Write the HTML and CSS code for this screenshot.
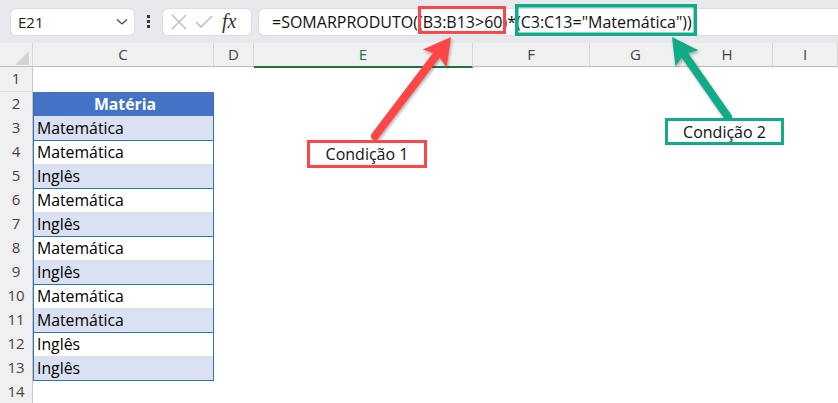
FILE: index.html
```html
<!DOCTYPE html>
<html lang="pt-BR">
<head>
    <meta charset="UTF-8">
    <title>SOMARPRODUTO com condições</title>
    <link rel="stylesheet" href="styles.css">
</head>
<body>
    <div class="topbar">
        <div class="namebox">
            <span>E21</span>
            <svg width="12" height="8" viewBox="0 0 12 8"><path d="M1 1.5 L6 6 L11 1.5" fill="none" stroke="#444" stroke-width="1.3"/></svg>
        </div>
        <div class="dots"><i></i><i></i><i></i></div>
        <div class="fxbox">
            <svg width="18" height="16" viewBox="0 0 18 16"><path d="M2 1 L16 15 M16 1 L2 15" stroke="#b8b8b8" stroke-width="1.3" fill="none"/></svg>
            <svg width="18" height="16" viewBox="0 0 18 16"><path d="M1 8 L6 13 L17 2" stroke="#b8b8b8" stroke-width="1.3" fill="none"/></svg>
            <span class="fx">fx</span>
        </div>
        <div class="formula">=SOMARPRODUTO((B3:B13&gt;60)*(C3:C13="Matemática"))</div>
    </div>

    <div class="sheet">
        <div class="colhead">
            <div class="corner"><span></span></div>
            <div>C</div>
            <div>D</div>
            <div class="sel">E</div>
            <div>F</div>
            <div>G</div>
            <div>H</div>
            <div>I</div>
        </div>
        <div class="row first"><div class="rh">1</div><div></div></div>
        <div class="row"><div class="rh">2</div><div class="cell th">Matéria</div></div>
        <div class="row"><div class="rh">3</div><div class="cell alt">Matemática</div></div>
        <div class="row"><div class="rh">4</div><div class="cell">Matemática</div></div>
        <div class="row"><div class="rh">5</div><div class="cell alt">Inglês</div></div>
        <div class="row"><div class="rh">6</div><div class="cell">Matemática</div></div>
        <div class="row"><div class="rh">7</div><div class="cell alt">Inglês</div></div>
        <div class="row"><div class="rh">8</div><div class="cell">Matemática</div></div>
        <div class="row"><div class="rh">9</div><div class="cell alt">Inglês</div></div>
        <div class="row"><div class="rh">10</div><div class="cell">Matemática</div></div>
        <div class="row"><div class="rh">11</div><div class="cell alt">Matemática</div></div>
        <div class="row"><div class="rh">12</div><div class="cell">Inglês</div></div>
        <div class="row"><div class="rh">13</div><div class="cell alt">Inglês</div></div>
        <div class="row"><div class="rh">14</div><div></div></div>
    </div>

    <!-- anotações por cima da planilha -->
    <svg class="marks" width="838" height="403" viewBox="0 0 838 403">
        <rect x="419.5" y="7.5" width="85" height="25" fill="none" stroke="#ff4646" stroke-width="3"/>
        <rect x="516.75" y="5.75" width="178.5" height="28.5" fill="none" stroke="#10ac8a" stroke-width="3.5"/>
        <g class="arrow">
            <line x1="375" y1="136" x2="438" y2="53" stroke="#ff4646" stroke-width="8" stroke-linecap="round"/>
            <polygon points="451,37 422.8,49.4 437.7,54.5 446.6,67.6" fill="#ff4646"/>
        </g>
        <g class="arrow">
            <line x1="728" y1="117" x2="684" y2="54" stroke="#10ac8a" stroke-width="8" stroke-linecap="round"/>
            <polygon points="672,37 675.4,66.3 684,54.2 698.4,50.3" fill="#10ac8a"/>
        </g>
    </svg>
    <div class="label red">Condição 1</div>
    <div class="label green">Condição 2</div>
</body>
</html>
```

FILE: styles.css
```css
* {
    box-sizing: border-box;
}

body {
    margin: 0;
    width: 838px;
    height: 403px;
    overflow: hidden;
    position: relative;
    background: #fff;
    font-family: 'Open Sans', 'Noto Sans', sans-serif;
    color: #000;
}

.topbar {
    display: flex;
    align-items: center;
    height: 43px;
    padding-left: 10px;
    background: #e8e9ec;
}

.namebox {
    display: flex;
    align-items: center;
    justify-content: space-between;
    width: 125px;
    height: 28px;
    padding: 0 6px 0 7px;
    background: #fff;
    border: 1px solid #dcdde0;
    border-radius: 6px;
    font-size: 15px;
    color: #222;
}

.dots {
    display: flex;
    flex-direction: column;
    align-items: center;
    gap: 2px;
    width: 27px;
}

.dots i {
    width: 3px;
    height: 3px;
    background: #3a3a3a;
}

.fxbox {
    display: flex;
    align-items: center;
    gap: 7px;
    width: 90px;
    height: 28px;
    padding-left: 7px;
    background: #fff;
    border: 1px solid #dcdde0;
    border-radius: 6px;
}

.fx {
    font-family: 'Liberation Serif', serif;
    font-style: italic;
    font-size: 20px;
    color: #333;
    margin-left: 2px;
}

.formula {
    flex: 1;
    height: 28px;
    margin-left: 6px;
    padding-left: 13px;
    background: #fff;
    border: 1px solid #dcdde0;
    border-right: none;
    border-radius: 6px 0 0 6px;
    font-size: 16px;
    line-height: 26px;
    color: #111;
    white-space: nowrap;
}

.colhead {
    display: grid;
    grid-template-columns: 33px 181px 40px 219px 117px 92px 91px 1fr;
    height: 24px;
    background: #f0f0f0;
    border-bottom: 1px solid #bdbdbd;
}

.colhead div {
    border-right: 1px solid #d6d6d6;
    text-align: center;
    font-size: 15px;
    line-height: 23px;
    color: #444;
}

.colhead .sel {
    color: #217346;
    border-bottom: 2px solid #217346;
}

.corner {
    position: relative;
}

.corner span {
    position: absolute;
    right: 3px;
    bottom: 3px;
    border-style: solid;
    border-width: 0 0 14px 14px;
    border-color: transparent transparent #d4d4d4 transparent;
}

.row {
    display: grid;
    grid-template-columns: 33px 181px;
    height: 24px;
}

.row.first {
    height: 25px;
}

.rh {
    background: #f0f0f0;
    border-right: 1px solid #c6c6c6;
    border-bottom: 1px solid #dedede;
    text-align: center;
    font-size: 15px;
    line-height: 23px;
    color: #444;
}

.cell {
    border: 1px solid #2f75b5;
    border-top: none;
    padding: 1px 0 0 3px;
    font-size: 15.8px;
    line-height: 23px;
}

.cell.th {
    background: #4472c4;
    border-color: #4472c4 #2f75b5 #2f75b5;
    color: #fff;
    font-weight: bold;
    text-align: center;
}

.cell.alt {
    background: #d9e1f2;
}

.marks {
    position: absolute;
    left: 0;
    top: 0;
    pointer-events: none;
}

.arrow {
    filter: drop-shadow(1px 2px 1.5px rgba(0, 0, 0, 0.3));
}

.label {
    position: absolute;
    background: #fff;
    font-size: 16px;
    line-height: 22px;
    text-align: center;
    color: #111;
}

.label.red {
    left: 307px;
    top: 140px;
    width: 120px;
    height: 28px;
    border: 3px solid #ff4646;
}

.label.green {
    left: 665px;
    top: 118px;
    width: 119px;
    height: 27px;
    border: 3px solid #10ac8a;
}
```
